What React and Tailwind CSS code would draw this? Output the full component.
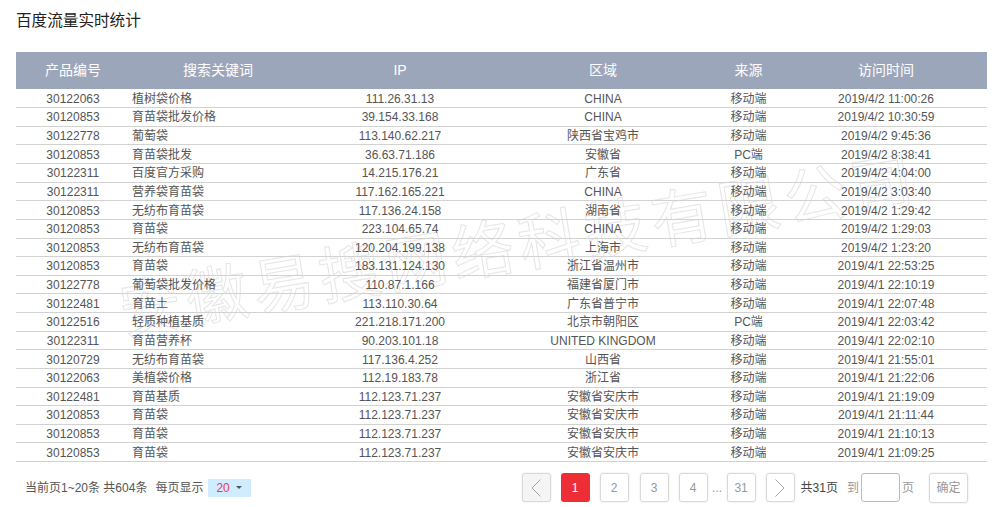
const rows = [
  ["30122063", "植树袋价格", "111.26.31.13", "CHINA", "移动端", "2019/4/2 11:00:26"],
  ["30120853", "育苗袋批发价格", "39.154.33.168", "CHINA", "移动端", "2019/4/2 10:30:59"],
  ["30122778", "葡萄袋", "113.140.62.217", "陕西省宝鸡市", "移动端", "2019/4/2 9:45:36"],
  ["30120853", "育苗袋批发", "36.63.71.186", "安徽省", "PC端", "2019/4/2 8:38:41"],
  ["30122311", "百度官方采购", "14.215.176.21", "广东省", "移动端", "2019/4/2 4:04:00"],
  ["30122311", "营养袋育苗袋", "117.162.165.221", "CHINA", "移动端", "2019/4/2 3:03:40"],
  ["30120853", "无纺布育苗袋", "117.136.24.158", "湖南省", "移动端", "2019/4/2 1:29:42"],
  ["30120853", "育苗袋", "223.104.65.74", "CHINA", "移动端", "2019/4/2 1:29:03"],
  ["30120853", "无纺布育苗袋", "120.204.199.138", "上海市", "移动端", "2019/4/2 1:23:20"],
  ["30120853", "育苗袋", "183.131.124.130", "浙江省温州市", "移动端", "2019/4/1 22:53:25"],
  ["30122778", "葡萄袋批发价格", "110.87.1.166", "福建省厦门市", "移动端", "2019/4/1 22:10:19"],
  ["30122481", "育苗土", "113.110.30.64", "广东省普宁市", "移动端", "2019/4/1 22:07:48"],
  ["30122516", "轻质种植基质", "221.218.171.200", "北京市朝阳区", "PC端", "2019/4/1 22:03:42"],
  ["30122311", "育苗营养杯", "90.203.101.18", "UNITED KINGDOM", "移动端", "2019/4/1 22:02:10"],
  ["30120729", "无纺布育苗袋", "117.136.4.252", "山西省", "移动端", "2019/4/1 21:55:01"],
  ["30122063", "美植袋价格", "112.19.183.78", "浙江省", "移动端", "2019/4/1 21:22:06"],
  ["30122481", "育苗基质", "112.123.71.237", "安徽省安庆市", "移动端", "2019/4/1 21:19:09"],
  ["30120853", "育苗袋", "112.123.71.237", "安徽省安庆市", "移动端", "2019/4/1 21:11:44"],
  ["30120853", "育苗袋", "112.123.71.237", "安徽省安庆市", "移动端", "2019/4/1 21:10:13"],
  ["30120853", "育苗袋", "112.123.71.237", "安徽省安庆市", "移动端", "2019/4/1 21:09:25"],
];

const headers = ["产品编号", "搜索关键词", "IP", "区域", "来源", "访问时间"];
const cols = "grid grid-cols-[114px_176px_188px_218px_73px_1fr]";
const pageBtn =
  "w-[29px] h-[29px] flex items-center justify-center rounded-[3px] border border-[#d9d9d9] text-[12px] text-[#999] shadow-[0_0_2px_rgba(0,0,0,0.12)]";

const Chevron = ({ left }) => (
  <svg width="12" height="20" viewBox="0 0 12 20" fill="none" stroke="#a8a8a8" strokeWidth="1">
    <path d={left ? "M10.5 1.5 2 10l8.5 8.5" : "M1.5 1.5 10 10l-8.5 8.5"} />
  </svg>
);

export default function App() {
  return (
    <div className="relative w-[1000px] h-[507px] overflow-hidden bg-white font-['Liberation_Sans','Noto_Sans_CJK_SC',sans-serif]">
      <div className="absolute left-[120px] top-[282px] -rotate-[9.5deg] whitespace-nowrap text-[62px] leading-none tracking-[5.4px] text-transparent [-webkit-text-stroke:1px_#e6e6e6] origin-left pointer-events-none">
        安徽易搜网络科技有限公司
      </div>
      <div className="relative px-[16px] pr-[13px]">
        <h1 className="h-[52px] pt-[12px] text-[15.6px] leading-[18px] font-normal text-[#222]">百度流量实时统计</h1>
        <div className={`${cols} h-[37px] items-center bg-[#9ca6ba] text-[14px] text-white text-center`}>
          {headers.map((h) => (
            <div key={h}>{h}</div>
          ))}
        </div>
        <div className="pt-[0.5px]">
          {rows.map((r, i) => (
            <div
              key={i}
              className={`${cols} h-[18.63px] items-center border-b border-[#d2d2d2] pt-[1px] text-[12px] leading-[16px] text-[#555] text-center`}
            >
              <div>{r[0]}</div>
              <div className="text-left pl-[2px]">{r[1]}</div>
              <div>{r[2]}</div>
              <div>{r[3]}</div>
              <div>{r[4]}</div>
              <div>{r[5]}</div>
            </div>
          ))}
        </div>
        <div className="flex items-center justify-between h-[29px] mt-[11px] pl-[9px] pr-[19px] text-[12px] text-[#555]">
          <div className="flex items-center">
            <span>当前页1~20条 共604条</span>
            <span className="ml-[8px]">每页显示</span>
            <div className="ml-[5px] w-[43px] h-[18px] flex items-center bg-[#d0ecff] pl-[8px]">
              <span className="text-[#e8404a] text-[12px]">20</span>
              <span className="ml-[6px] w-0 h-0 border-x-[3px] border-x-transparent border-t-[3px] border-t-[#555]" />
            </div>
          </div>
          <div className="flex items-center">
            <div className={`${pageBtn} bg-[#f5f5f5]`}>
              <Chevron left />
            </div>
            <div className="ml-[10px] w-[29px] h-[29px] flex items-center justify-center rounded-[3px] bg-[#ee2e36] text-[12px] text-white">1</div>
            <div className={`${pageBtn} ml-[10px]`}>2</div>
            <div className={`${pageBtn} ml-[11px]`}>3</div>
            <div className={`${pageBtn} ml-[10px]`}>4</div>
            <span className="w-[19px] text-center text-[#999]">...</span>
            <div className={pageBtn}>31</div>
            <div className={`${pageBtn} ml-[10px]`}>
              <Chevron />
            </div>
            <span className="ml-[6px] text-[#444]">共31页</span>
            <span className="ml-[9px] text-[#999]">到</span>
            <div className="ml-[2px] w-[39px] h-[29px] rounded-[3px] border border-[#bbb]" />
            <span className="ml-[2px] text-[#999]">页</span>
            <div className="ml-[15px] w-[39px] h-[30px] flex items-center justify-center rounded-[3px] border border-[#d9d9d9] text-[#999] shadow-[0_0_2px_rgba(0,0,0,0.12)]">确定</div>
          </div>
        </div>
      </div>
    </div>
  );
}
